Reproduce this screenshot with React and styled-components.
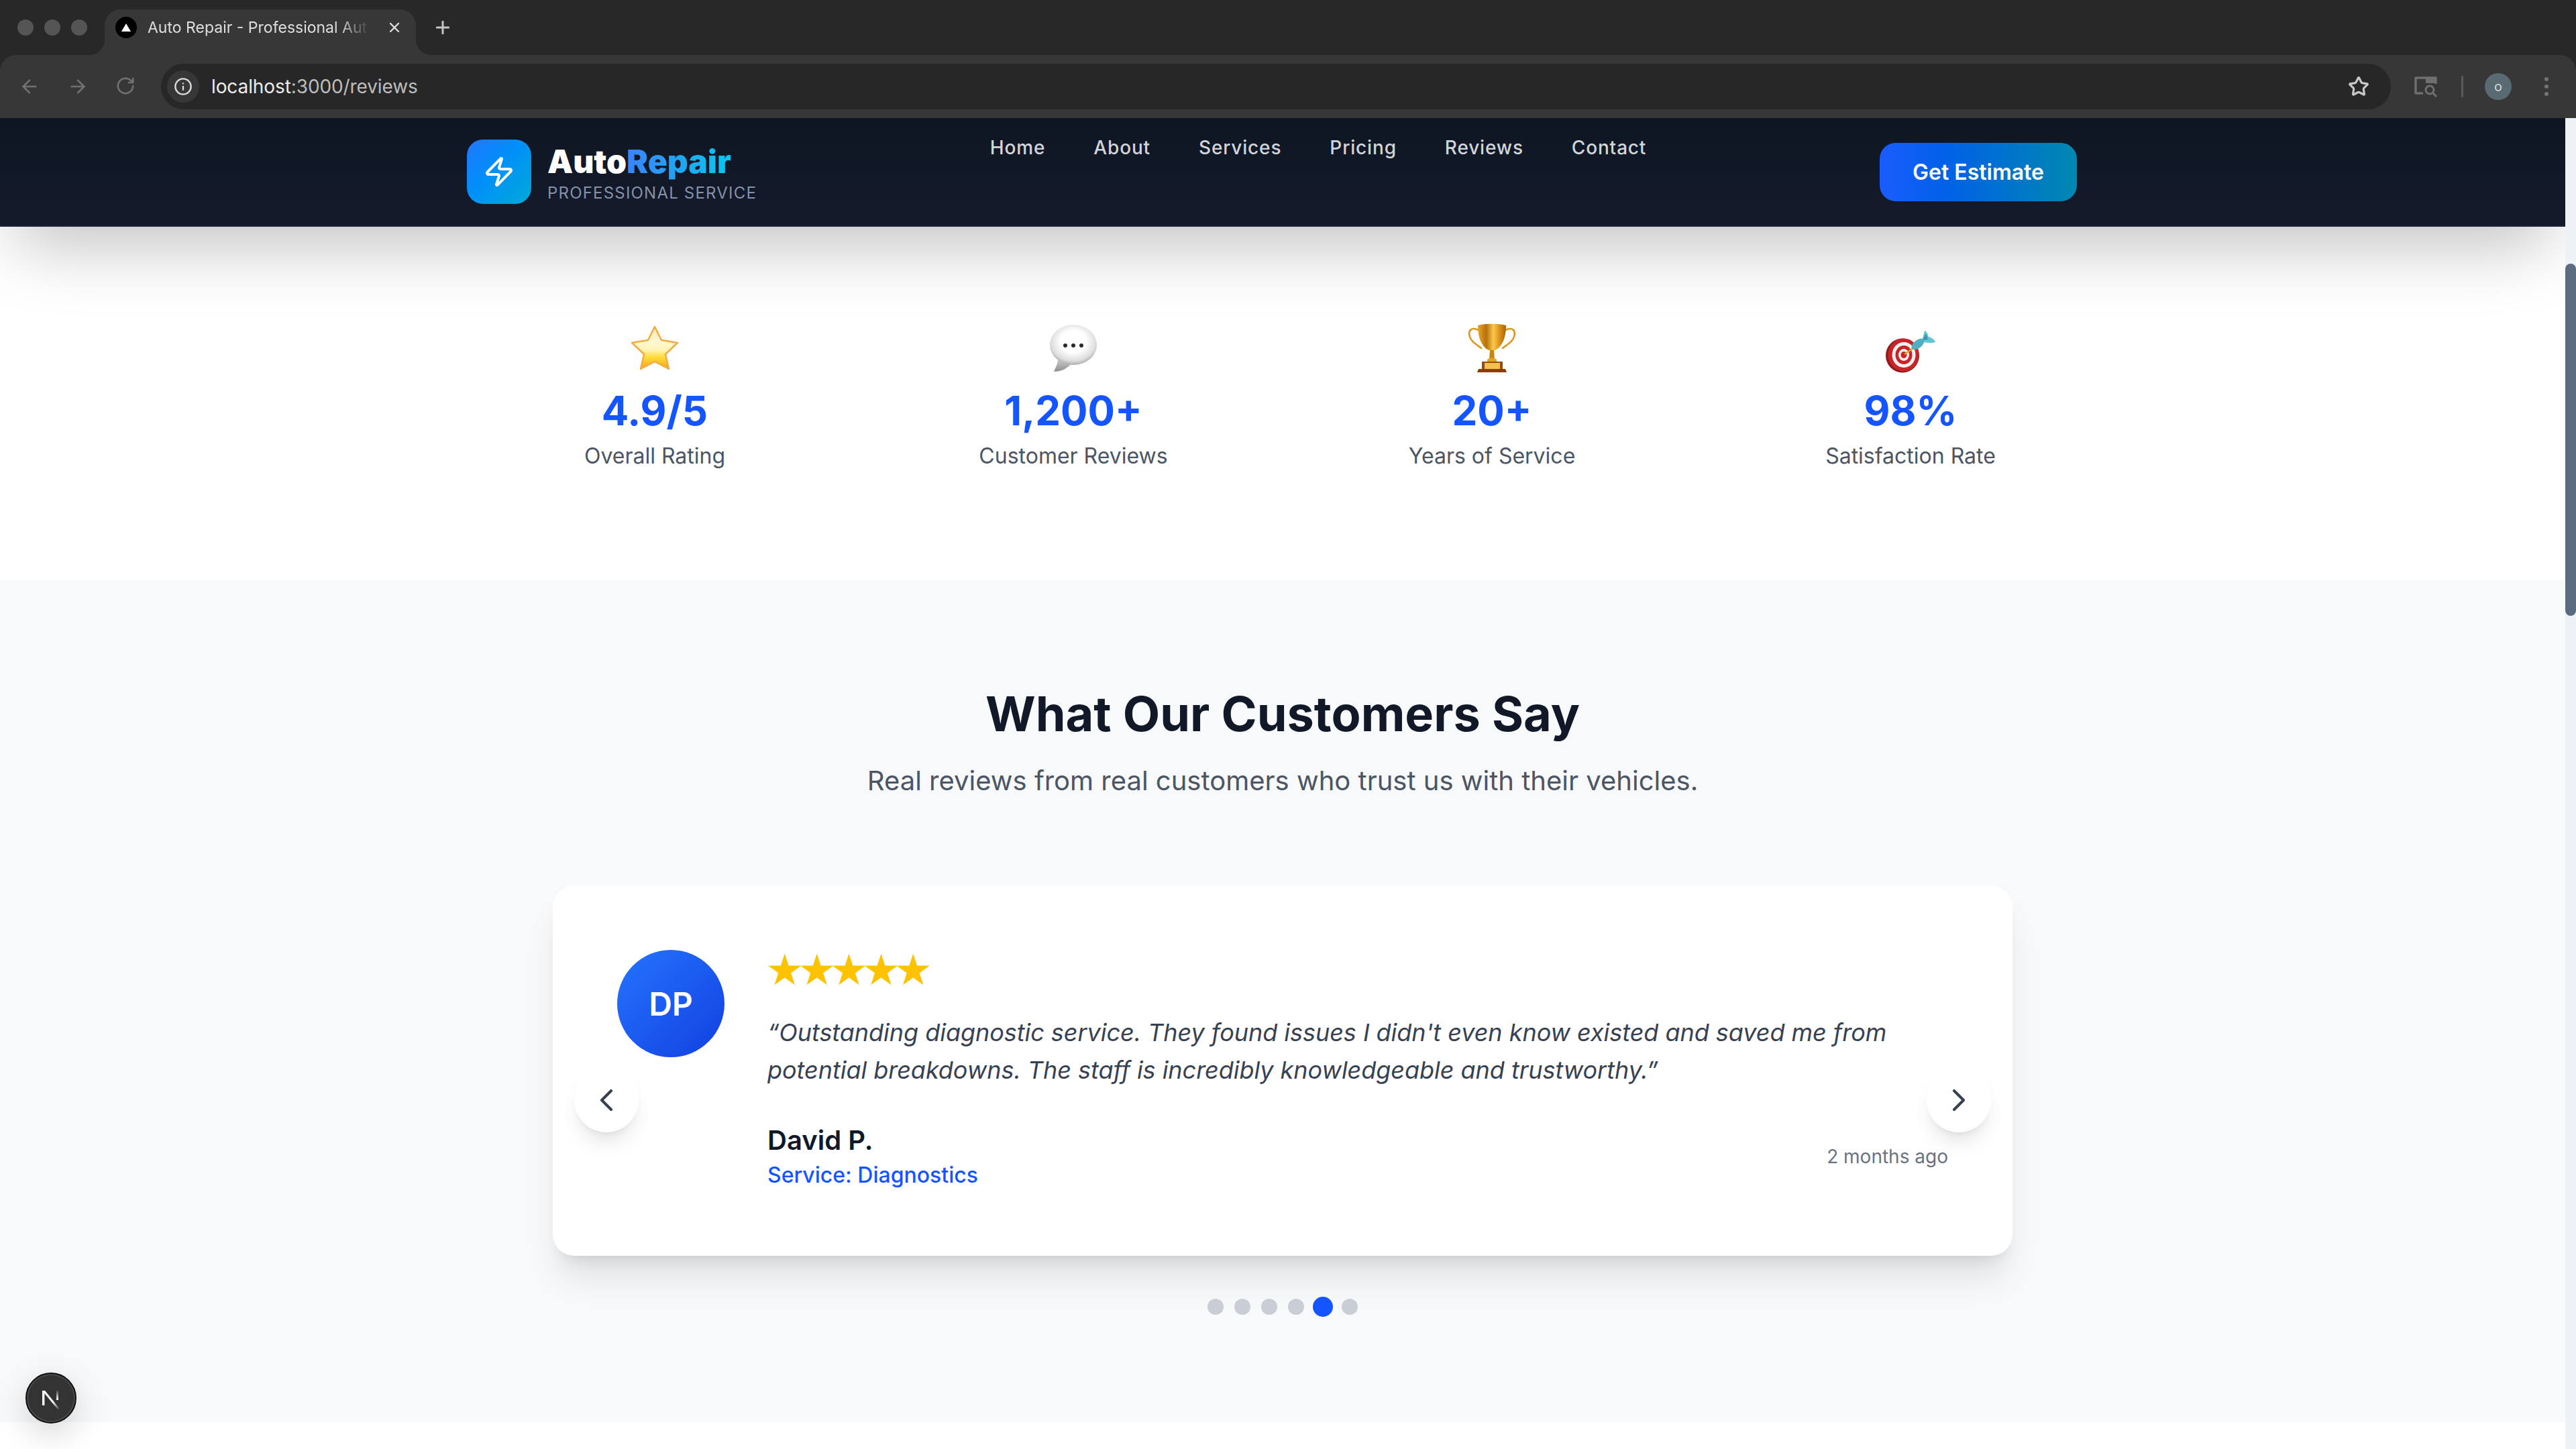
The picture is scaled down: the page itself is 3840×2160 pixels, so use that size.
import React from "react";
import styled, { createGlobalStyle } from "styled-components";
import { ArrowLeft, ArrowRight, RotateCw, Info, Star, X, Plus, Zap, ChevronLeft, ChevronRight } from "lucide-react";

const Global = createGlobalStyle`
  html, body { margin: 0; padding: 0; background: #fff; }
  * { box-sizing: border-box; }
  body { font-family: Inter, "Noto Sans", sans-serif; }
`;

const Screen = styled.div`
  position: relative;
  width: 3840px;
  height: 2160px;
  overflow: hidden;
  background: #282828;
  display: flex;
  flex-direction: column;
`;

const TabStrip = styled.div`
  height: 82px;
  background: #282828;
  display: flex;
  align-items: flex-end;
  padding-left: 26px;
`;

const WindowDots = styled.div`
  display: flex;
  gap: 16px;
  align-self: flex-start;
  margin-top: 29px;
  margin-right: 26px;
`;

const WindowDot = styled.span`
  width: 24px;
  height: 24px;
  border-radius: 50%;
  background: #555;
`;

const Tab = styled.div`
  position: relative;
  width: 464px;
  height: 68px;
  background: #373737;
  border-radius: 24px 24px 0 0;
  display: flex;
  align-items: center;
  padding: 0 20px 14px 16px;
  color: #dedede;

  &::before, &::after {
    content: "";
    position: absolute;
    bottom: 0;
    width: 24px;
    height: 24px;
  }
  &::before {
    left: -24px;
    background: radial-gradient(circle at 0 0, #282828 24px, #373737 24.5px);
  }
  &::after {
    right: -24px;
    background: radial-gradient(circle at 100% 0, #282828 24px, #373737 24.5px);
  }
`;

const Favicon = styled.span`
  width: 32px;
  height: 32px;
  border-radius: 50%;
  background: #000;
  flex: none;
  display: flex;
  align-items: center;
  justify-content: center;
  margin-right: 16px;
`;

const TabTitle = styled.span`
  flex: 1;
  font-size: 23px;
  white-space: nowrap;
  -webkit-mask-image: linear-gradient(90deg, #000 80%, transparent 93%);
  mask-image: linear-gradient(90deg, #000 80%, transparent 93%);
`;

const NewTab = styled.span`
  display: flex;
  margin-left: 25px;
  margin-bottom: 26px;
  align-self: flex-end;
  color: #c4c4c4;
`;

const Toolbar = styled.div`
  height: 94px;
  background: #373737;
  border-radius: 24px 24px 0 0;
  display: flex;
  align-items: center;
  padding: 0 0 0 28px;
`;

const NavIcons = styled.div`
  display: flex;
  gap: 40px;
  color: #717171;
  margin-right: 38px;
`;

const Omnibox = styled.div`
  width: 3324px;
  height: 68px;
  background: #272727;
  border-radius: 34px;
  display: flex;
  align-items: center;
  padding: 0 32px 0 9px;
`;

const InfoChip = styled.span`
  width: 48px;
  height: 48px;
  border-radius: 50%;
  background: #373737;
  color: #dcdcdc;
  display: flex;
  align-items: center;
  justify-content: center;
  margin-right: 18px;
`;

const Url = styled.span`
  flex: 1;
  font-size: 28px;
  letter-spacing: -0.1px;
  color: #bdbdbd;
  b { font-weight: 400; color: #ececec; }
`;

const ToolIcons = styled.div`
  display: flex;
  align-items: center;
  margin-left: 34px;
`;

const Divider = styled.span`
  width: 3px;
  height: 32px;
  background: #5a5a5a;
  border-radius: 2px;
  margin: 0 32px 0 35px;
`;

const Profile = styled.span`
  width: 40px;
  height: 40px;
  border-radius: 50%;
  background: #5a6a72;
  color: #d0d5d8;
  font-size: 20px;
  display: flex;
  align-items: center;
  justify-content: center;
`;

const MenuDots = styled.span`
  display: flex;
  flex-direction: column;
  gap: 5px;
  margin-left: 49px;
  i { width: 6px; height: 6px; border-radius: 50%; background: #747474; }
`;

const Viewport = styled.div`
  flex: 1;
  min-height: 0;
  display: flex;
`;

const Page = styled.main`
  flex: 1;
  min-width: 0;
  display: flex;
  flex-direction: column;
  background: #fff;
  overflow: hidden;
`;

const ScrollTrack = styled.div`
  width: 16px;
  background: #eef1f6;
  padding-top: 217px;
`;

const ScrollThumb = styled.div`
  width: 16px;
  height: 525px;
  border-radius: 8px;
  background: #5b6b80;
`;

const Header = styled.header`
  position: relative;
  z-index: 2;
  flex: none;
  height: 162px;
  padding: 0 728px 0 696px;
  background: linear-gradient(180deg, #0f1623, #141a2a);
  border-bottom: 2px solid #1f2637;
  box-shadow: 0 50px 100px -24px rgba(0, 0, 0, 0.25);
  display: flex;
  align-items: center;
  justify-content: space-between;
`;

const Brand = styled.div`
  display: flex;
  align-items: center;
  gap: 24px;
`;

const LogoMark = styled.div`
  width: 96px;
  height: 96px;
  border-radius: 24px;
  background: linear-gradient(135deg, #2277ff 0%, #0090f8 45%, #00aad8 100%);
  color: #fff;
  display: flex;
  align-items: center;
  justify-content: center;
`;

const BrandText = styled.div`
  padding-top: 4px;
`;

const BrandName = styled.div`
  font-size: 48px;
  line-height: 56px;
  font-weight: 900;
  color: #fff;
  span {
    background: linear-gradient(90deg, #3b82f6, #06c8f0);
    -webkit-background-clip: text;
    background-clip: text;
    color: transparent;
  }
`;

const BrandTag = styled.div`
  font-size: 24px;
  line-height: 32px;
  letter-spacing: 0.05em;
  color: #8492ab;
  margin-top: 3px;
`;

const Nav = styled.nav`
  align-self: flex-start;
  margin-top: 24px;
  display: flex;
  gap: 72px;
`;

const NavLink = styled.a`
  font-size: 28px;
  line-height: 40px;
  font-weight: 500;
  letter-spacing: 0.03em;
  color: #d1d5db;
`;

const EstimateButton = styled.button`
  width: 294px;
  height: 87px;
  border: 0;
  border-radius: 24px;
  background: linear-gradient(90deg, #1a5cff 0%, #0062e6 35%, #0088b0 100%);
  color: #fff;
  font-family: inherit;
  font-size: 32px;
  font-weight: 600;
`;

const Stats = styled.section`
  flex: none;
  height: 526px;
  padding-top: 146px;
  display: flex;
  justify-content: center;
`;

const StatGrid = styled.div`
  width: 2496px;
  display: grid;
  grid-template-columns: repeat(4, 1fr);
  align-content: start;
`;

const StatItem = styled.div`
  display: flex;
  flex-direction: column;
  align-items: center;
`;

const EmojiBox = styled.svg`
  display: block;
  width: 80px;
  height: 72px;
  overflow: visible;
  margin-bottom: 20px;
`;

const StatValue = styled.div`
  font-size: 60px;
  line-height: 72px;
  font-weight: 700;
  color: #1455ff;
`;

const StatLabel = styled.div`
  margin-top: 8px;
  font-size: 32px;
  line-height: 48px;
  color: #4b5563;
`;

const ReviewsSection = styled.section`
  flex: none;
  height: 1256px;
  background: #f8f9fb;
  padding-top: 160px;
  display: flex;
  flex-direction: column;
  align-items: center;
`;

const Title = styled.h2`
  margin: 0;
  font-size: 72px;
  line-height: 80px;
  font-weight: 700;
  color: #111827;
`;

const Subtitle = styled.p`
  margin: 32px 0 128px;
  font-size: 40px;
  line-height: 56px;
  color: #4b5563;
`;

const Carousel = styled.div`
  position: relative;
  width: 2176px;
`;

const Card = styled.article`
  height: 552px;
  padding: 96px;
  background: #fff;
  border-radius: 32px;
  box-shadow: 0 40px 50px -10px rgba(0, 0, 0, 0.1), 0 16px 20px -12px rgba(0, 0, 0, 0.1);
  display: flex;
  gap: 64px;
`;

const Avatar = styled.div`
  width: 160px;
  height: 160px;
  flex: none;
  border-radius: 50%;
  background: linear-gradient(135deg, #2574ff, #1240e0);
  color: #fff;
  font-size: 48px;
  font-weight: 600;
  display: flex;
  align-items: center;
  justify-content: center;
`;

const ReviewBody = styled.div`
  flex: 1;
  min-width: 0;
`;

const Stars = styled.div`
  height: 95px;
  margin-left: -3px;
  font-family: "DejaVu Sans", sans-serif;
  font-size: 64px;
  line-height: 60px;
  letter-spacing: -9.5px;
  color: #fec200;
  white-space: nowrap;
`;

const Quote = styled.p`
  margin: 0 0 49px;
  font-size: 36px;
  line-height: 56px;
  letter-spacing: -0.04px;
  font-style: italic;
  color: #374151;
`;

const ReviewFooter = styled.div`
  display: flex;
  align-items: center;
  justify-content: space-between;
`;

const Author = styled.div`
  font-size: 40px;
  line-height: 56px;
  font-weight: 600;
  color: #111827;
`;

const ServiceName = styled.div`
  font-size: 32px;
  line-height: 48px;
  font-weight: 500;
  color: #1455ff;
`;

const When = styled.div`
  font-size: 28px;
  line-height: 40px;
  color: #6b7280;
`;

const ArrowButton = styled.button`
  position: absolute;
  top: 50%;
  ${(p) => (p.$side === "left" ? "left: 32px;" : "right: 32px;")}
  width: 96px;
  height: 96px;
  margin-top: -48px;
  padding: 0;
  border: 0;
  border-radius: 50%;
  background: #fff;
  color: #374151;
  box-shadow: 0 20px 30px -6px rgba(0, 0, 0, 0.1), 0 8px 12px -8px rgba(0, 0, 0, 0.1);
  display: flex;
  align-items: center;
  justify-content: center;
`;

const Dots = styled.div`
  height: 24px;
  margin-top: 64px;
  display: flex;
  align-items: center;
  justify-content: center;
  gap: 16px;
`;

const Dot = styled.span`
  width: 24px;
  height: 24px;
  border-radius: 50%;
  background: ${(p) => (p.$active ? "#1455ff" : "#c9cdd5")};
  ${(p) => p.$active && "transform: scale(1.25);"}
`;

const DevBadge = styled.div`
  position: absolute;
  left: 38px;
  top: 2046px;
  width: 76px;
  height: 76px;
  border-radius: 50%;
  background: #333;
  border: 2px solid #111;
  box-shadow: inset 0 0 0 2px #4a4a4a, 0 16px 48px rgba(0, 0, 0, 0.16);
  display: flex;
  align-items: center;
  justify-content: center;
`;

const StarEmoji = () => (
  <EmojiBox viewBox="0 0 80 72">
    <defs>
      <linearGradient id="starFill" x1="0" y1="0" x2="0" y2="1">
        <stop offset="0" stopColor="#fde9a8" />
        <stop offset="0.35" stopColor="#fff8d4" />
        <stop offset="0.55" stopColor="#fff4b4" />
        <stop offset="0.72" stopColor="#ffdc3c" />
        <stop offset="1" stopColor="#f4a416" />
      </linearGradient>
    </defs>
    <path
      d="M40 3 L50 23 L74 27 L56 44 L61 66 L40 55 L19 66 L24 44 L6 27 L30 23 Z"
      fill="url(#starFill)"
      stroke="#f3ab42"
      strokeWidth="2.5"
      strokeLinejoin="round"
    />
  </EmojiBox>
);

const BubbleEmoji = () => (
  <EmojiBox viewBox="0 0 80 72">
    <defs>
      <radialGradient id="bubbleFill" cx="0.5" cy="0.42" r="0.6">
        <stop offset="0.45" stopColor="#ffffff" />
        <stop offset="0.8" stopColor="#dedede" />
        <stop offset="1" stopColor="#a4a4a4" />
      </radialGradient>
      <linearGradient id="bubbleTail" x1="0" y1="0" x2="0" y2="1">
        <stop offset="0" stopColor="#dedede" />
        <stop offset="1" stopColor="#8f8f8f" />
      </linearGradient>
    </defs>
    <path d="M17 46 C18 56 14 63 11 70 C21 70 31 66 38 57 Z" fill="url(#bubbleTail)" />
    <ellipse cx="40" cy="30" rx="35" ry="30" fill="url(#bubbleFill)" />
    <circle cx="28" cy="31" r="3" fill="#2b2b2b" />
    <circle cx="40" cy="31" r="3" fill="#2b2b2b" />
    <circle cx="52" cy="31" r="3" fill="#2b2b2b" />
  </EmojiBox>
);

const TrophyEmoji = () => (
  <EmojiBox viewBox="0 0 80 72">
    <defs>
      <linearGradient id="cupFill" x1="0" y1="0" x2="1" y2="0">
        <stop offset="0" stopColor="#e8a52c" />
        <stop offset="0.3" stopColor="#b8700c" />
        <stop offset="0.55" stopColor="#fbc94a" />
        <stop offset="0.8" stopColor="#d58c14" />
        <stop offset="1" stopColor="#a9630a" />
      </linearGradient>
    </defs>
    <path d="M20 8 C10 3 4 8 7 18 C9 25 15 28 24 35" fill="none" stroke="#d9981f" strokeWidth="2.6" strokeLinecap="round" />
    <path d="M60 8 C70 3 76 8 73 18 C71 25 65 28 56 35" fill="none" stroke="#d9981f" strokeWidth="2.6" strokeLinecap="round" />
    <path d="M19 1 C29 -2 51 -2 61 1 C61 20 55 33 45 38 L35 38 C25 33 19 20 19 1 Z" fill="url(#cupFill)" />
    <path d="M37 38 L43 38 L44 52 L36 52 Z" fill="#c9860f" />
    <path d="M33 52 C36 49 44 49 47 52 L47 55 L33 55 Z" fill="#e0a52a" />
    <rect x="25" y="55" width="31" height="12" fill="#9c4a08" />
    <rect x="29" y="57" width="23" height="9" fill="#f3c14e" />
    <path d="M20 66 L60 66 L62 71 L18 71 Z" fill="#8a3d06" />
  </EmojiBox>
);

const DartEmoji = () => (
  <EmojiBox viewBox="0 0 80 72">
    <ellipse cx="28" cy="46" rx="25" ry="25.5" fill="#8e1a1a" />
    <ellipse cx="29.5" cy="45" rx="23" ry="24.5" fill="#c9232a" />
    <ellipse cx="30" cy="45" rx="17.5" ry="19" fill="#f4f1ef" />
    <ellipse cx="30" cy="45" rx="12.5" ry="14" fill="#c9232a" />
    <ellipse cx="30" cy="45" rx="8" ry="9" fill="#f4f1ef" />
    <ellipse cx="30" cy="45" rx="4.5" ry="5" fill="#c9232a" />
    <path d="M31 44 L44 35" stroke="#d7a52a" strokeWidth="2.4" />
    <path d="M57 24 L61 9 C65 11 66 15 67 18 C71 19 76 22 77 26 C71 28 63 28 57 24 Z" fill="#62c6d3" />
    <path d="M58 23 L63 13 L66 22 Z" fill="#3a97a8" />
    <ellipse cx="51" cy="29" rx="11" ry="6" transform="rotate(-38 51 29)" fill="#4fb0c2" />
  </EmojiBox>
);

const navItems = ["Home", "About", "Services", "Pricing", "Reviews", "Contact"];

const stats = [
  { icon: <StarEmoji />, value: "4.9/5", label: "Overall Rating" },
  { icon: <BubbleEmoji />, value: "1,200+", label: "Customer Reviews" },
  { icon: <TrophyEmoji />, value: "20+", label: "Years of Service" },
  { icon: <DartEmoji />, value: "98%", label: "Satisfaction Rate" },
];

export default function App() {
  return (
    <Screen>
      <Global />
      <TabStrip>
        <WindowDots>
          <WindowDot />
          <WindowDot />
          <WindowDot />
        </WindowDots>
        <Tab>
          <Favicon>
            <svg width="14" height="12" viewBox="0 0 14 12">
              <path d="M7 0 L14 12 L0 12 Z" fill="#fff" />
            </svg>
          </Favicon>
          <TabTitle>Auto Repair - Professional Aut</TabTitle>
          <X size={24} strokeWidth={2.4} color="#dedede" />
        </Tab>
        <NewTab>
          <Plus size={30} strokeWidth={2.4} />
        </NewTab>
      </TabStrip>
      <Toolbar>
        <NavIcons>
          <ArrowLeft size={32} strokeWidth={2} />
          <ArrowRight size={32} strokeWidth={2} />
          <RotateCw size={30} strokeWidth={2} />
        </NavIcons>
        <Omnibox>
          <InfoChip>
            <Info size={28} strokeWidth={2} />
          </InfoChip>
          <Url>
            <b>localhost</b>:3000/reviews
          </Url>
          <Star size={32} strokeWidth={2.4} color="#c7c7c7" />
        </Omnibox>
        <ToolIcons>
          <svg width="36" height="32" viewBox="0 0 36 32" fill="none">
            <path d="M14 26 H3 V3 H33 V12" stroke="#6f6f6f" strokeWidth="3.4" strokeLinejoin="round" />
            <rect x="18" y="2" width="16" height="9" fill="#6f6f6f" />
            <circle cx="24" cy="21" r="6" stroke="#6f6f6f" strokeWidth="3" />
            <path d="M28.5 25.5 L34 31" stroke="#6f6f6f" strokeWidth="3" />
          </svg>
          <Divider />
          <Profile>o</Profile>
          <MenuDots>
            <i />
            <i />
            <i />
          </MenuDots>
        </ToolIcons>
      </Toolbar>
      <Viewport>
        <Page>
          <Header>
            <Brand>
              <LogoMark>
                <Zap size={48} strokeWidth={2} />
              </LogoMark>
              <BrandText>
                <BrandName>
                  Auto<span>Repair</span>
                </BrandName>
                <BrandTag>PROFESSIONAL SERVICE</BrandTag>
              </BrandText>
            </Brand>
            <Nav>
              {navItems.map((item) => (
                <NavLink key={item}>{item}</NavLink>
              ))}
            </Nav>
            <EstimateButton>Get Estimate</EstimateButton>
          </Header>
          <Stats>
            <StatGrid>
              {stats.map((s) => (
                <StatItem key={s.label}>
                  {s.icon}
                  <StatValue>{s.value}</StatValue>
                  <StatLabel>{s.label}</StatLabel>
                </StatItem>
              ))}
            </StatGrid>
          </Stats>
          <ReviewsSection>
            <Title>What Our Customers Say</Title>
            <Subtitle>Real reviews from real customers who trust us with their vehicles.</Subtitle>
            <Carousel>
              <Card>
                <Avatar>DP</Avatar>
                <ReviewBody>
                  <Stars>★★★★★</Stars>
                  <Quote>
                    “Outstanding diagnostic service. They found issues I didn't even know existed and saved me from
                    potential breakdowns. The staff is incredibly knowledgeable and trustworthy.”
                  </Quote>
                  <ReviewFooter>
                    <div>
                      <Author>David P.</Author>
                      <ServiceName>Service: Diagnostics</ServiceName>
                    </div>
                    <When>2 months ago</When>
                  </ReviewFooter>
                </ReviewBody>
              </Card>
              <ArrowButton $side="left">
                <ChevronLeft size={56} strokeWidth={1.8} />
              </ArrowButton>
              <ArrowButton $side="right">
                <ChevronRight size={56} strokeWidth={1.8} />
              </ArrowButton>
              <Dots>
                {[0, 1, 2, 3, 4, 5].map((i) => (
                  <Dot key={i} $active={i === 4} />
                ))}
              </Dots>
            </Carousel>
          </ReviewsSection>
        </Page>
        <ScrollTrack>
          <ScrollThumb />
        </ScrollTrack>
      </Viewport>
      <DevBadge>
        <svg width="36" height="36" viewBox="0 0 36 36">
          <defs>
            <linearGradient id="nFade" x1="0" y1="0" x2="0" y2="1">
              <stop offset="0" stopColor="#fff" stopOpacity="0.1" />
              <stop offset="1" stopColor="#fff" />
            </linearGradient>
            <linearGradient id="nSlash" x1="0" y1="0" x2="1" y2="1">
              <stop offset="0.6" stopColor="#fff" />
              <stop offset="1" stopColor="#fff" stopOpacity="0" />
            </linearGradient>
          </defs>
          <rect x="5" y="7" width="3.4" height="22" fill="#fff" />
          <rect x="26" y="7" width="3" height="14" fill="url(#nFade)" />
          <path d="M5 7 L9 7 L31 34 L28 35 Z" fill="url(#nSlash)" />
        </svg>
      </DevBadge>
    </Screen>
  );
}
